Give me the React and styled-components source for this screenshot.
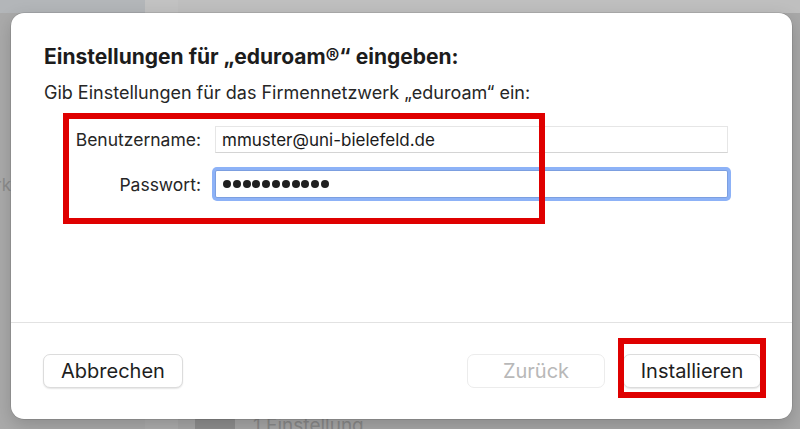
import React from "react";
import styled, { createGlobalStyle } from "styled-components";

const Global = createGlobalStyle`
  html, body { margin: 0; padding: 0; }
  body { font-family: Inter, "Noto Sans", "Liberation Sans", sans-serif; -webkit-font-smoothing: antialiased; }
`;

const Desktop = styled.div`
  position: relative;
  width: 800px;
  height: 429px;
  overflow: hidden;
  display: grid;
  grid-template-columns: 145px 33px 1fr;
  background: #a9a9a9;
`;

const Column = styled.div`
  display: flex;
  flex-direction: column;
  background: ${(p) => p.$bg};
`;

const TopStrip = styled.div`
  height: 13px;
  background: ${(p) => p.$bg};
  flex: none;
`;

const SideItem = styled.div`
  margin-top: 162px;
  width: 11px;
  display: flex;
  justify-content: flex-end;
  white-space: nowrap;
  font-size: 17px;
  color: #8c8c8c;
`;

const BottomRow = styled.div`
  margin-top: auto;
  display: flex;
  align-items: center;
  gap: 18px;
  padding: 0 0 0 17px;
  height: 36px;
  margin-bottom: -14px;
`;

const Pill = styled.div`
  width: 40px;
  height: 26px;
  border-radius: 8px;
  background: #8f8f8f;
`;

const BottomText = styled.span`
  font-size: 19px;
  color: #8a8a8a;
`;

const Sheet = styled.div`
  position: absolute;
  left: 11px;
  top: 13px;
  width: 781px;
  height: 406px;
  background: #ffffff;
  border-radius: 13px;
  box-shadow: 0 0 0 0.5px rgba(0, 0, 0, 0.18), 0 6px 18px rgba(0, 0, 0, 0.18);
  display: flex;
  flex-direction: column;
  color: #1f1f1f;
`;

const Body = styled.div`
  flex: 1;
  padding: 32px 64px 0 33px;
  display: flex;
  flex-direction: column;
`;

const Title = styled.h1`
  margin: 0;
  font-size: 21px;
  line-height: 24px;
  font-weight: 700;
  color: #1c1c1c;
  white-space: nowrap;
`;

const Subtitle = styled.p`
  margin: 13px 0 0 0;
  font-size: 18px;
  line-height: 22px;
  color: #262626;
  white-space: nowrap;
`;

const Form = styled.div`
  position: relative;
  margin-top: 22px;
  display: grid;
  grid-template-columns: 157px 1fr;
  column-gap: 14px;
  row-gap: 17px;
  align-items: center;
`;

const Label = styled.label`
  font-size: 17.5px;
  text-align: right;
  color: #262626;
`;

const Field = styled.div`
  height: 27px;
  box-sizing: border-box;
  display: flex;
  align-items: center;
  padding: 0 6px;
  font-size: 17px;
  color: #1a1a1a;
  background: #fff;
  border: 1px solid #e6e6e6;
  border-bottom-color: #d4d4d4;
`;

const FocusField = styled(Field)`
  height: 28px;
  padding: 0 7px;
  border: 1px solid #7c9fe0;
  box-shadow: 0 0 0 3px #8db2f7;
  border-radius: 2px;
  gap: 1.8px;
`;

const Dot = styled.span`
  width: 8px;
  height: 8px;
  border-radius: 50%;
  background: #1f1f1f;
  flex: none;
`;

const Annotation = styled.div`
  position: absolute;
  pointer-events: none;
  border: 6px solid #df0000;
  box-sizing: border-box;
  left: ${(p) => p.$l}px;
  top: ${(p) => p.$t}px;
  width: ${(p) => p.$w}px;
  height: ${(p) => p.$h}px;
`;

const Footer = styled.div`
  height: 96px;
  flex: none;
  border-top: 1px solid #e2e2e2;
  display: flex;
  align-items: center;
  padding: 0 31px 0 32px;
  gap: 18px;
`;

const Button = styled.button`
  height: 34px;
  width: ${(p) => p.$w}px;
  box-sizing: border-box;
  border-radius: 7px;
  border: 1px solid #dedede;
  background: #fff;
  font-family: inherit;
  font-size: 20px;
  color: ${(p) => (p.disabled ? "#b8b8b8" : "#1e1e1e")};
  box-shadow: ${(p) => (p.disabled ? "none" : "0 1px 1.5px rgba(0,0,0,0.1)")};
  border-color: ${(p) => (p.disabled ? "#ececec" : "#dcdcdc")};
  padding: 0;
`;

const Spacer = styled.div`
  flex: 1;
`;

const Marked = styled.div`
  position: relative;
  display: flex;
`;

export default function App() {
  return (
    <>
      <Global />
      <Desktop>
        <Column $bg="#aaaaaa">
          <TopStrip $bg="#b3b6b9" />
          <SideItem>Netzwerk</SideItem>
        </Column>
        <Column $bg="#aeaeae">
          <TopStrip $bg="#c2c2c2" />
        </Column>
        <Column $bg="#a8a8a8">
          <TopStrip $bg="#bfbfbf" />
          <BottomRow>
            <Pill />
            <BottomText>1 Einstellung</BottomText>
          </BottomRow>
        </Column>
        <Sheet>
          <Body>
            <Title>Einstellungen für „eduroam®“ eingeben:</Title>
            <Subtitle>Gib Einstellungen für das Firmennetzwerk „eduroam“ ein:</Subtitle>
            <Form>
              <Label>Benutzername:</Label>
              <Field>mmuster@uni-bielefeld.de</Field>
              <Label>Passwort:</Label>
              <FocusField>
                {Array.from({ length: 11 }).map((_, i) => (
                  <Dot key={i} />
                ))}
              </FocusField>
              <Annotation $l={19} $t={-13} $w={482} $h={111} />
            </Form>
          </Body>
          <Footer>
            <Button $w={140}>Abbrechen</Button>
            <Spacer />
            <Button $w={138} disabled>
              Zurück
            </Button>
            <Marked>
              <Button $w={138}>Installieren</Button>
              <Annotation $l={-5} $t={-16} $w={148} $h={60} />
            </Marked>
          </Footer>
        </Sheet>
      </Desktop>
    </>
  );
}
